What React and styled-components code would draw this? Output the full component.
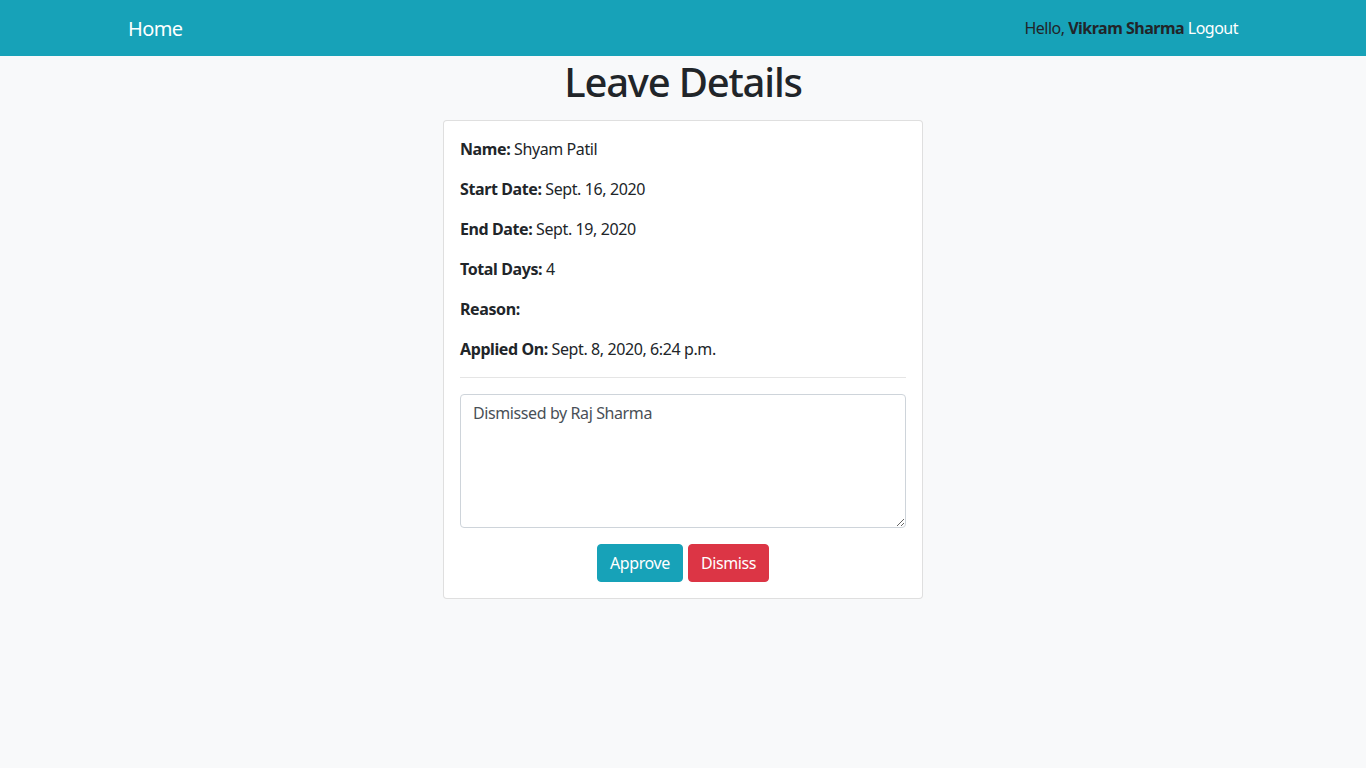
import styled, { createGlobalStyle } from "styled-components";

const GlobalStyle = createGlobalStyle`
  html, body {
    margin: 0;
    padding: 0;
    background-color: #f8f9fa;
    color: #212529;
    font-family: "Noto Sans", "Open Sans", sans-serif;
    font-size: 16px;
    line-height: 1.5;
    letter-spacing: -0.4px;
  }
  #root {
    min-height: 100vh;
    background-color: #f8f9fa;
  }
`;

const Navbar = styled.nav`
  height: 56px;
  background-color: #17a2b8;
  display: flex;
  align-items: center;
`;

const NavContainer = styled.div`
  width: 1140px;
  margin: 0 auto;
  padding: 0 15px;
  box-sizing: border-box;
  display: flex;
  justify-content: space-between;
  align-items: center;
`;

const Brand = styled.a`
  color: #fff;
  font-size: 20px;
  letter-spacing: -0.6px;
  text-decoration: none;
  line-height: 1.5;
  padding-top: 2px;
`;

const UserInfo = styled.div`
  color: #212529;
  font-size: 16px;
  letter-spacing: -0.5px;
`;

const UserName = styled.b`
  font-weight: 700;
`;

const NavLink = styled.a`
  color: #fff;
  text-decoration: none;
`;

const Main = styled.main`
  display: flex;
  flex-direction: column;
  align-items: center;
`;

const Title = styled.h1`
  margin: 2px 0 14px;
  font-size: 40px;
  font-weight: 500;
  line-height: 1.2;
  letter-spacing: -1.2px;
`;

const Card = styled.div`
  width: 480px;
  box-sizing: border-box;
  background: #fff;
  border: 1px solid rgba(0, 0, 0, 0.125);
  border-radius: 4px;
  padding: 16px;
`;

const Field = styled.p`
  margin: 0 0 16px;
`;

const Label = styled.b`
  font-weight: 700;
`;

const Divider = styled.hr`
  margin: 0 0 16px;
  border: 0;
  border-top: 1px solid rgba(0, 0, 0, 0.1);
`;

const Comment = styled.textarea`
  display: block;
  width: 100%;
  box-sizing: border-box;
  height: 134px;
  padding: 6px 12px;
  font-family: inherit;
  font-size: 16px;
  line-height: 1.5;
  letter-spacing: -0.4px;
  color: #495057;
  background: #fff;
  border: 1px solid #ced4da;
  border-radius: 4px;
  margin: 0 0 16px;
`;

const Actions = styled.div`
  display: flex;
  justify-content: center;
  gap: 5px;
`;

const Button = styled.button`
  font-family: inherit;
  font-size: 16px;
  line-height: 1.5;
  letter-spacing: -0.4px;
  padding: 6px 12px;
  border: 1px solid ${({ variant }) => (variant === "danger" ? "#dc3545" : "#17a2b8")};
  background-color: ${({ variant }) => (variant === "danger" ? "#dc3545" : "#17a2b8")};
  color: #fff;
  border-radius: 4px;
  cursor: pointer;
`;

const details = [
  { label: "Name:", value: "Shyam Patil" },
  { label: "Start Date:", value: "Sept. 16, 2020" },
  { label: "End Date:", value: "Sept. 19, 2020" },
  { label: "Total Days:", value: "4" },
  { label: "Reason:", value: "" },
  { label: "Applied On:", value: "Sept. 8, 2020, 6:24 p.m." },
];

const App = () => {
  return (
    <>
      <GlobalStyle />
      <Navbar>
        <NavContainer>
          <Brand href="#">Home</Brand>
          <UserInfo>
            Hello, <UserName>Vikram Sharma</UserName> <NavLink href="#">Logout</NavLink>
          </UserInfo>
        </NavContainer>
      </Navbar>
      <Main>
        <Title>Leave Details</Title>
        <Card>
          {details.map((d) => (
            <Field key={d.label}>
              <Label>{d.label}</Label> {d.value}
            </Field>
          ))}
          <Divider />
          <Comment defaultValue="Dismissed by Raj Sharma" />
          <Actions>
            <Button>Approve</Button>
            <Button variant="danger">Dismiss</Button>
          </Actions>
        </Card>
      </Main>
    </>
  );
};

export default App;
